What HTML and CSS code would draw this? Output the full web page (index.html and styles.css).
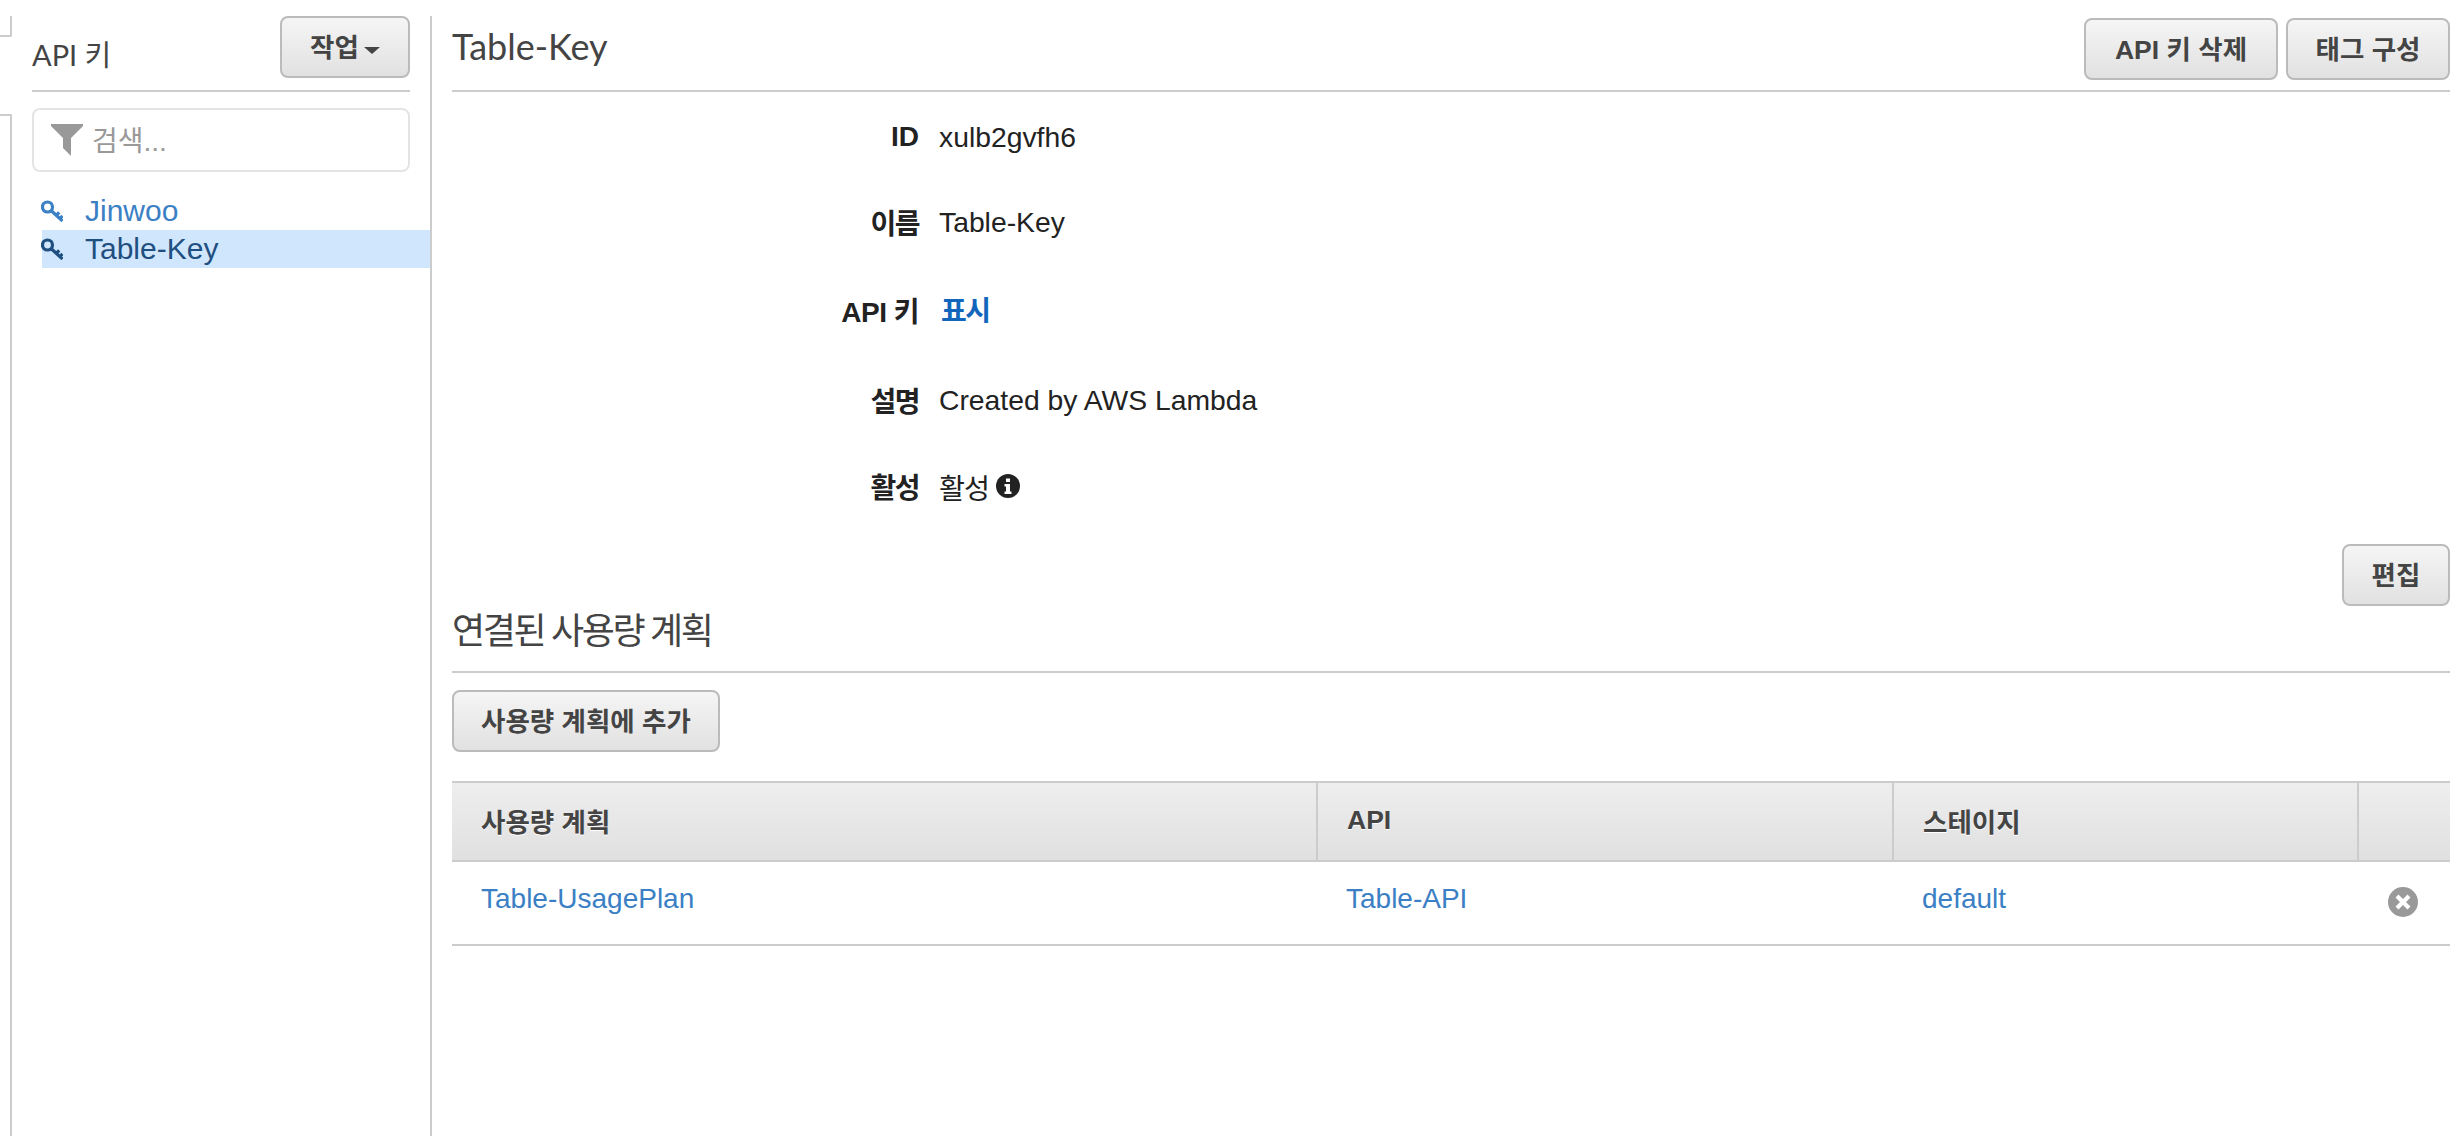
FILE: index.html
```html
<!DOCTYPE html>
<html lang="ko">
<head>
<meta charset="utf-8">
<title>API 키</title>
<link rel="stylesheet" href="styles.css">
</head>
<body>
<div class="app">
  <div class="edge">
    <div class="edge-top"></div>
    <div class="edge-bottom"></div>
  </div>
  <aside class="sidebar">
    <div class="side-head">
      <h2 class="side-title">API 키</h2>
      <button class="btn btn-actions">작업<span class="caret"></span></button>
    </div>
    <div class="search">
      <svg class="funnel" viewBox="0 0 32 32"><path d="M0 0H32V2L20 14V32L12 24V14L0 2Z"/></svg>
      <span class="placeholder">검색...</span>
    </div>
    <ul class="keys">
      <li class="key">
        <svg class="key-icon" viewBox="0 0 22 22"><use href="#key"/></svg>
        <a>Jinwoo</a>
      </li>
      <li class="key key-active">
        <svg class="key-icon" viewBox="0 0 22 22"><use href="#key"/></svg>
        <a>Table-Key</a>
      </li>
    </ul>
  </aside>
  <main class="main">
    <header class="main-head">
      <h1 class="main-title">Table-Key</h1>
      <div class="head-actions">
        <button class="btn btn-delete">API 키 삭제</button>
        <button class="btn btn-tags">태그 구성</button>
      </div>
    </header>
    <dl class="details">
      <div class="row"><dt>ID</dt><dd>xulb2gvfh6</dd></div>
      <div class="row"><dt class="ko">이름</dt><dd>Table-Key</dd></div>
      <div class="row"><dt class="ko-mixed">API 키</dt><dd><a class="show">표시</a></dd></div>
      <div class="row"><dt class="ko">설명</dt><dd>Created by AWS Lambda</dd></div>
      <div class="row"><dt class="ko">활성</dt><dd><span class="ko">활성</span>
        <svg class="info" viewBox="0 0 24 24"><circle cx="12" cy="12" r="12" fill="#222"/><path d="M10 4.500h4v3.500h-4zM8.500 10h5.500v7.500h1.500v2.500h-7v-2.500h1.500v-5h-1.500z" fill="#fff"/></svg>
      </dd></div>
    </dl>
    <div class="edit-row"><button class="btn btn-edit">편집</button></div>
    <h2 class="section-title">연결된 사용량 계획</h2>
    <button class="btn btn-add">사용량 계획에 추가</button>
    <table class="plans">
      <colgroup><col class="c1"><col class="c2"><col class="c3"><col></colgroup>
      <thead>
        <tr><th>사용량 계획</th><th>API</th><th>스테이지</th><th></th></tr>
      </thead>
      <tbody>
        <tr>
          <td><a>Table-UsagePlan</a></td>
          <td><a>Table-API</a></td>
          <td><a>default</a></td>
          <td class="remove">
            <svg class="remove-icon" viewBox="0 0 30 30"><circle cx="15" cy="15" r="15" fill="#999"/><path d="M10.500 7.500 15 12l4.500-4.500 3 3L18 15l4.500 4.500-3 3L15 18l-4.500 4.500-3-3L12 15l-4.500-4.500z" fill="#fff"/></svg>
          </td>
        </tr>
      </tbody>
    </table>
  </main>
</div>
<svg class="defs" width="0" height="0">
  <defs>
    <g id="key" fill="none" stroke="currentColor" stroke-width="3.200">
      <circle cx="6.500" cy="7" r="5"/>
      <path d="M10 10.500 21.500 21M15 15.500l3.200-3.200M18.500 18.800l3-2.800"/>
    </g>
  </defs>
</svg>
</body>
</html>
```

FILE: styles.css
```css
* { box-sizing: border-box; }
html, body { margin: 0; height: 100%; background: #fff; overflow: hidden; }
body {
  font-family: "Liberation Sans", "Noto Sans CJK KR", sans-serif;
  font-size: 28px;
  color: #222;
}
h1, h2, dl, dt, dd, ul { margin: 0; padding: 0; }
ul { list-style: none; }
.defs { position: absolute; }

.app { display: flex; height: 1136px; }

.edge { width: 12px; flex: none; display: flex; flex-direction: column; }
.edge-top {
  margin-top: 16px; height: 21px;
  border-right: 2px solid #ccc; border-bottom: 2px solid #ccc;
  border-bottom-right-radius: 2px;
}
.edge-bottom {
  margin-top: 77px; flex: 1;
  border-right: 2px solid #ccc; border-top: 2px solid #ccc;
  border-top-right-radius: 2px;
}

.btn {
  font-family: "Liberation Sans", "Noto Sans CJK KR", sans-serif;
  font-size: 26.500px;
  font-weight: 700;
  color: #444;
  background: linear-gradient(#f5f5f5, #e1e1e1);
  border: 2px solid #bbb;
  border-radius: 8px;
  padding: 0 0 3px;
  height: 62px;
}

.sidebar {
  width: 420px; flex: none;
  margin-top: 16px;
  padding: 0 20px;
  border-right: 2px solid #ccc;
}
.side-head {
  display: flex; justify-content: space-between; align-items: flex-start;
  height: 76px;
  border-bottom: 2px solid #ccc;
}
.side-title {
  font-family: Lato, "Noto Sans CJK KR", sans-serif;
  font-weight: 400; font-size: 29px; color: #444;
  line-height: 36px; margin-top: 21px;
}
.btn-actions { width: 130px; }
.caret {
  display: inline-block; margin-left: 5px; vertical-align: 3px;
  border-left: 8px solid transparent; border-right: 8px solid transparent;
  border-top: 7px solid #444;
}
.search {
  display: flex; align-items: center;
  margin-top: 16px; height: 64px;
  border: 2px solid #e4e4e4; border-radius: 8px;
  padding-left: 17px;
}
.funnel { width: 32px; height: 32px; fill: #999; flex: none; }
.placeholder { margin-left: 9px; color: #999; font-size: 28px; padding-bottom: 2px; }
.keys { margin: 18px -20px 0 0; padding-left: 10px; }
.key {
  display: flex; align-items: center;
  height: 40px; padding-top: 2px; color: #3b80c4; font-size: 30px;
}
.key-active { height: 38px; padding-top: 0; background: #cfe6fc; color: #1f4f80; }
.key-icon { width: 22px; height: 22px; margin-right: 22px; flex: none; margin-left: -1px; }

.main { flex: 1; padding: 18px 14px 0 20px; min-width: 0; }
.main-head {
  display: flex; justify-content: space-between; align-items: flex-start;
  height: 74px;
  border-bottom: 2px solid #ccc;
}
.main-title {
  font-family: Lato, "Noto Sans CJK KR", sans-serif;
  font-weight: 400; font-size: 36px; color: #444;
  line-height: 44px; margin-top: 6px;
}
.head-actions { display: flex; gap: 8px; }
.btn-delete { width: 194px; }
.btn-tags { width: 164px; }

.details { display: flex; flex-direction: column; }
.row { display: flex; align-items: center; height: 40px; gap: 20px; }
.row:nth-child(1) { margin-top: 25px; }
.row:nth-child(2) { margin-top: 45px; }
.row:nth-child(3) { margin-top: 48px; }
.row:nth-child(4) { margin-top: 50px; }
.row:nth-child(5) { margin-top: 46px; }
.row dt { width: 467px; text-align: right; font-weight: 700; }
.row dt.ko { letter-spacing: -1.500px; }
.row dt.ko-mixed { letter-spacing: -.5px; }
.row dd { display: flex; align-items: center; gap: 7px; font-size: 28.300px; }
.ko { letter-spacing: -1px; }
.show { color: #1166bb; font-weight: 700; margin: 0 0 2px 2px; letter-spacing: -1.500px; font-size: 28px; }
.info { width: 24px; height: 24px; }

.edit-row { display: flex; justify-content: flex-end; margin-top: 38px; }
.btn-edit { width: 108px; }

.section-title {
  font-family: Lato, "Noto Sans CJK KR", sans-serif;
  font-weight: 400; font-size: 36px; color: #444;
  letter-spacing: -2.400px;
  margin-top: 0; height: 67px; line-height: 48px;
  border-bottom: 2px solid #ccc;
}
.btn-add { display: block; width: 268px; margin-top: 17px; }

.plans {
  margin-top: 29px; width: 100%;
  table-layout: fixed; border-collapse: collapse;
}
.c1 { width: 865px; }
.c2 { width: 576px; }
.c3 { width: 465px; }
.plans th {
  height: 79px; padding: 0 29px 2px; text-align: left;
  font-size: 26.500px; font-weight: 700; color: #444;
  background: linear-gradient(#eeeeee, #e0e0e0);
  border-top: 2px solid #ccc; border-bottom: 2px solid #ccc;
  border-left: 2px solid #ccc;
  text-shadow: 0 1px 0 #fff;
}
.plans th:first-child { border-left: 0; }
.plans td {
  height: 84px; padding: 0 29px 9px;
  border-bottom: 2px solid #ccc;
  color: #3b80c4; font-size: 28px;
}
.plans td.remove { padding: 0 0 9px 30px; }
.remove-icon { display: block; width: 30px; height: 30px; margin-top: 7px; }
```
